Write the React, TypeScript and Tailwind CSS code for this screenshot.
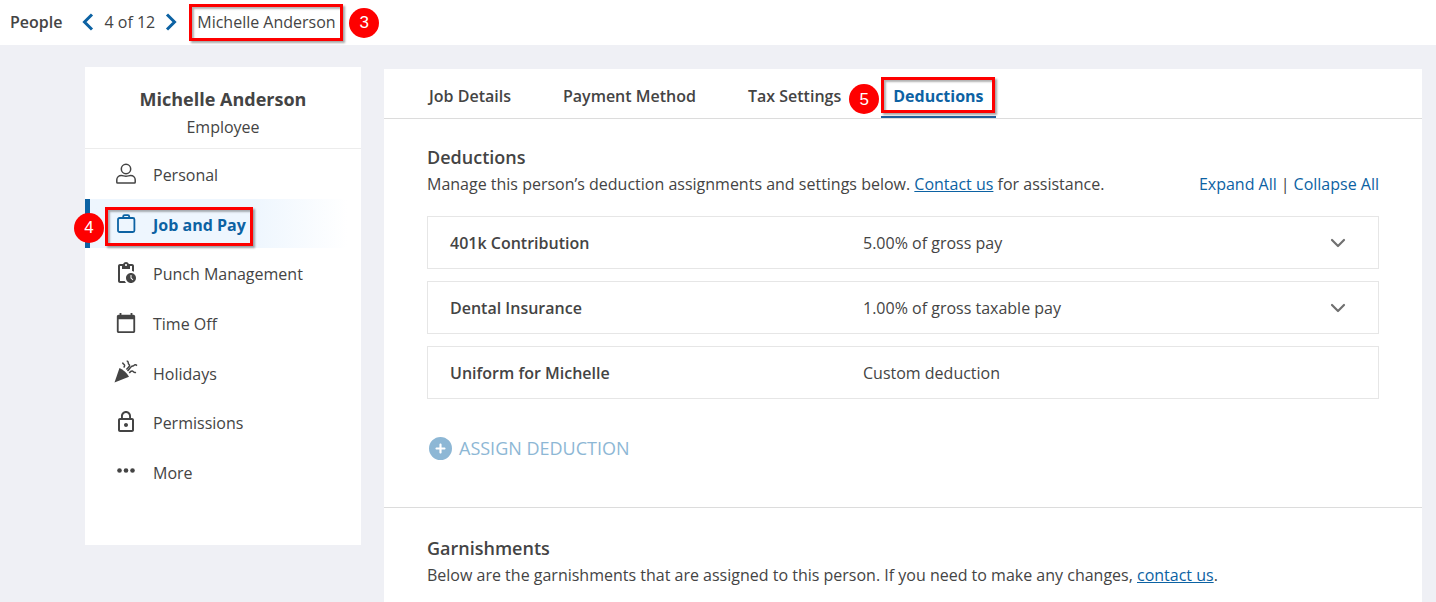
import React from "react";
import { FaCirclePlus } from "react-icons/fa6";
import { MdCalendarToday, MdLockOutline, MdPendingActions } from "react-icons/md";

interface NavItem {
  label: string;
  icon: React.ReactNode;
  active?: boolean;
}

interface Deduction {
  name: string;
  amount: string;
  expandable: boolean;
}

const PersonIcon = () => (
  <svg width="24" height="24" viewBox="0 0 24 24" fill="none" stroke="currentColor" strokeWidth="1.5">
    <circle cx="12" cy="7" r="4.7" />
    <path d="M2.8 20.2v-2.4c0-2.4 2-4.3 4.6-4.3 1.6 0 2.8.8 4.6.8s3-.8 4.6-.8c2.6 0 4.6 1.9 4.6 4.3v2.4c0 .5-.3.8-.8.8H3.6c-.5 0-.8-.3-.8-.8z" />
  </svg>
);

const BriefcaseIcon = () => (
  <svg width="24" height="24" viewBox="0 0 24 24" fill="none" stroke="currentColor" strokeWidth="1.8">
    <rect x="4" y="7" width="16.4" height="14" rx="1.5" />
    <path d="M9.2 7V5.5c0-.8.5-1.3 1.3-1.3h3.4c.8 0 1.3.5 1.3 1.3V7" />
  </svg>
);

const PartyIcon = () => (
  <svg width="24" height="24" viewBox="0 0 24 24" fill="none" stroke="currentColor" strokeWidth="1.5">
    <path d="M5.5 8C9 9.5 13 13 15 16.7L.5 22.500z" fill="currentColor" stroke="none" />
    <path d="M8.7 2.5c-.3 1.8 2 1.6 1.9 3 0 .8-.4 1.3-.9 1.9" />
    <path d="M12.7 1c2.8.3.6 2.4 2.3 3.300 1.500.9.3 2.300-2.600 5.200" />
    <path d="M13.5 11c2-1.8 2.2-3 3.7-4.300 1.200-1 2-.2 2.800-1.300.8-1 2-.6 3 .2" />
    <path d="M15.3 13c1-1.5 2-2.2 3.2-1.900 1.200.4 1.200 2.200 3.500 1.300" />
  </svg>
);

const DotsIcon = () => (
  <svg width="24" height="24" viewBox="0 0 24 24" fill="currentColor">
    <circle cx="5.5" cy="11.5" r="2.3" />
    <circle cx="12" cy="11.5" r="2.3" />
    <circle cx="18.5" cy="11.5" r="2.3" />
  </svg>
);

const navItems: NavItem[] = [
  { label: "Personal", icon: <PersonIcon /> },
  { label: "Job and Pay", icon: <BriefcaseIcon />, active: true },
  { label: "Punch Management", icon: <MdPendingActions size={24} /> },
  { label: "Time Off", icon: <MdCalendarToday size={22} /> },
  { label: "Holidays", icon: <PartyIcon /> },
  { label: "Permissions", icon: <MdLockOutline size={24} /> },
  { label: "More", icon: <DotsIcon /> },
];

const tabs = ["Job Details", "Payment Method", "Tax Settings", "Deductions"];

const deductions: Deduction[] = [
  { name: "401k Contribution", amount: "5.00% of gross pay", expandable: true },
  { name: "Dental Insurance", amount: "1.00% of gross taxable pay", expandable: true },
  { name: "Uniform for Michelle", amount: "Custom deduction", expandable: false },
];

// Red frame around the element that a step points to
function Frame({ className }: { className: string }) {
  return (
    <span
      className={`pointer-events-none absolute border-[3px] border-[#fe0000] shadow-[2px_2px_2px_rgba(0,0,0,0.35),inset_2px_2px_2px_rgba(0,0,0,0.3)] ${className}`}
    />
  );
}

// Numbered step marker
function Step({ n, className }: { n: number; className: string }) {
  return (
    <span
      className={`absolute flex size-[30px] items-center justify-center rounded-full bg-[#fe0000] font-['Liberation_Sans',sans-serif] text-[17px] leading-none font-normal text-white ${className}`}
    >
      {n}
    </span>
  );
}

function Chevron({ direction }: { direction: "left" | "right" }) {
  return (
    <svg width="12" height="18" viewBox="0 0 12 18" fill="none" stroke="currentColor" strokeWidth="3">
      <path d={direction === "left" ? "M10 1.5 2.5 9 10 16.5" : "M2 1.5 9.5 9 2 16.5"} />
    </svg>
  );
}

function Sidebar() {
  return (
    <aside className="mt-[22px] w-[276px] shrink-0 self-start bg-white pb-[49px]">
      <div className="border-b border-[#ececec] pt-[18px] pb-[7px] text-center">
        <h2 className="text-lg leading-7 font-bold">Michelle Anderson</h2>
        <p className="leading-7">Employee</p>
      </div>
      <nav>
        <ul className="flex h-[347px] flex-col">
          {navItems.map((item) => (
            <li key={item.label} className="flex-1">
              <a
                href="#"
                className={
                  item.active
                    ? "relative flex h-full items-center border-l-[5px] border-[#0c62a3] bg-linear-to-r from-[#eef6fe] from-60% to-white to-95% pl-6 font-bold text-[#0c62a3]"
                    : "flex h-full items-center pl-[29px]"
                }
              >
                <span className="mr-[15px] flex w-6 justify-center">{item.icon}</span>
                <span className="pt-[3px]">{item.label}</span>
                {item.active && (
                  <>
                    <Frame className="top-2 left-[15px] h-[39px] w-[148px]" />
                    <Step n={4} className="top-[14px] -left-4" />
                  </>
                )}
              </a>
            </li>
          ))}
        </ul>
      </nav>
    </aside>
  );
}

function Tabs() {
  return (
    <nav className="flex gap-7 border-b border-[#dcdcdc] px-[33px]">
      {tabs.map((tab) => (
        <a
          key={tab}
          href="#"
          className={
            tab === "Deductions"
              ? "relative border-b-2 border-[#1f609c] px-3 pt-[15px] pb-2 font-bold text-[#0c62a3]"
              : "px-3 pt-[15px] pb-2 font-semibold"
          }
        >
          {tab}
          {tab === "Deductions" && (
            <>
              <Step n={5} className="top-[15px] -left-8" />
              <Frame className="top-2 left-0 h-9 w-[114px]" />
            </>
          )}
        </a>
      ))}
    </nav>
  );
}

function DeductionRow({ deduction }: { deduction: Deduction }) {
  return (
    <li className="flex h-[53px] items-center border border-[#e6e6e6] pr-8 pl-[22px]">
      <span className="w-[413px] font-semibold">{deduction.name}</span>
      <span className="flex-1">{deduction.amount}</span>
      {deduction.expandable && (
        <button type="button" aria-label={`Expand ${deduction.name}`} className="text-[#707070]">
          <svg width="16" height="10" viewBox="0 0 16 10" fill="none" stroke="currentColor" strokeWidth="2.2" strokeLinecap="round" strokeLinejoin="round">
            <path d="M2 2l6 6 6-6" />
          </svg>
        </button>
      )}
    </li>
  );
}

export default function App() {
  return (
    <div className="flex min-h-screen flex-col bg-[#eff0f5] font-['Open_Sans',sans-serif] text-base text-[#444444]">
      <header className="flex h-[45px] items-center bg-white pb-[2px] pl-[10px]">
        <span className="mr-5 font-semibold">People</span>
        <button type="button" aria-label="Previous person" className="text-[#0c62a3]">
          <Chevron direction="left" />
        </button>
        <span className="mx-[10px]">4 of 12</span>
        <button type="button" aria-label="Next person" className="text-[#0c62a3]">
          <Chevron direction="right" />
        </button>
        <span className="relative ml-5">
          Michelle Anderson
          <Frame className="-top-[6px] -left-2 h-[37px] w-[154px]" />
          <Step n={3} className="-top-[2px] left-[152px]" />
        </span>
      </header>

      <div className="flex flex-1 gap-[23px] pr-[14px] pl-[85px]">
        <Sidebar />
        <main className="mt-6 flex-1 bg-white">
          <Tabs />

          <section className="border-b border-[#dcdcdc] px-[43px] pt-6 pb-[45px]">
            <h1 className="text-lg leading-7 font-semibold">Deductions</h1>
            <div className="flex justify-between leading-[26px]">
              <p>
                Manage this person’s deduction assignments and settings below.{" "}
                <a href="#" className="text-[#0c62a3] underline">Contact us</a> for assistance.
              </p>
              <div className="flex gap-1">
                <button type="button" className="text-[#0c62a3]">Expand All</button>
                <span>|</span>
                <button type="button" className="text-[#0c62a3]">Collapse All</button>
              </div>
            </div>

            <ul className="mt-[19px] flex flex-col gap-3">
              {deductions.map((deduction) => (
                <DeductionRow key={deduction.name} deduction={deduction} />
              ))}
            </ul>

            <button type="button" className="mt-[35px] ml-[2px] flex items-center gap-[7px] text-lg text-[#8db7d5]">
              <FaCirclePlus size={23} />
              ASSIGN DEDUCTION
            </button>
          </section>

          <section className="px-[43px] pt-[26px]">
            <h1 className="text-lg leading-7 font-semibold">Garnishments</h1>
            <p className="leading-[26px]">
              Below are the garnishments that are assigned to this person. If you need to make any changes,{" "}
              <a href="#" className="text-[#0c62a3] underline">contact us</a>.
            </p>
          </section>
        </main>
      </div>
    </div>
  );
}
